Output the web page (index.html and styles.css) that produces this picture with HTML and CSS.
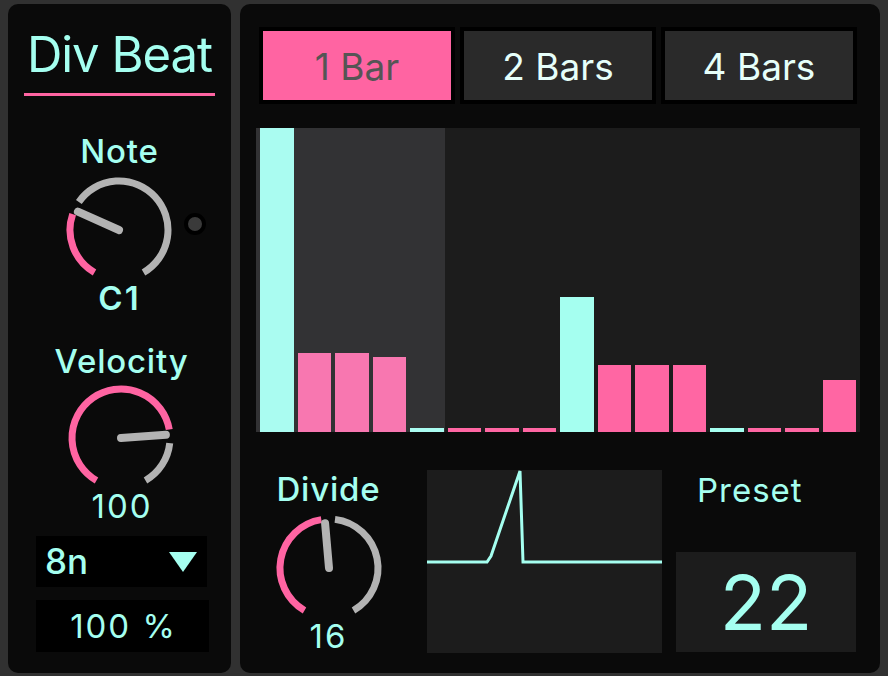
FILE: index.html
```html
<!DOCTYPE html>
<html lang="en">
<head>
  <meta charset="UTF-8" />
  <title>Div Beat</title>
  <link rel="stylesheet" href="styles.css">
</head>
<body>

  <div class="device">

    <div class="side">
      <div class="title">Div Beat</div>

      <div class="label note-label">Note</div>
      <div class="note-row">
        <svg class="knob" width="110" height="102" viewBox="0 0 110 102">
          <path class="arc-on" d="M30.5 95.44 A49 49 0 0 1 8.67 37.05" />
          <path class="arc-off" d="M14.86 24.89 A49 49 0 1 1 79.5 95.44" />
          <line class="needle" x1="55" y1="53" x2="13.9" y2="34.7" />
        </svg>
        <div class="led"></div>
      </div>
      <div class="value bold c1">C1</div>

      <div class="label vel-label">Velocity</div>
      <svg class="knob vel-knob" width="110" height="102" viewBox="0 0 110 102">
        <path class="arc-on" d="M30.5 95.44 A49 49 0 1 1 103.26 44.49" />
        <path class="arc-off" d="M103.73 58.12 A49 49 0 0 1 79.5 95.44" />
        <line class="needle" x1="55" y1="53" x2="99.89" y2="49.86" />
      </svg>
      <div class="value vel-value">100</div>

      <div class="select">
        <span>8n</span>
        <svg width="28" height="20" viewBox="0 0 28 20"><polygon points="0,0 28,0 14,20" fill="#a5fff0" /></svg>
      </div>
      <div class="percent">100 %</div>
    </div>

    <div class="main">
      <div class="tabs">
        <div class="tab active">1 Bar</div>
        <div class="tab">2 Bars</div>
        <div class="tab">4 Bars</div>
      </div>

      <div class="chart">
        <div class="bar accent lit" style="height: 304px"></div>
        <div class="bar lit" style="height: 79px"></div>
        <div class="bar lit" style="height: 79px"></div>
        <div class="bar lit" style="height: 75px"></div>
        <div class="bar accent lit" style="height: 4px"></div>
        <div class="bar" style="height: 4px"></div>
        <div class="bar" style="height: 4px"></div>
        <div class="bar" style="height: 4px"></div>
        <div class="bar accent" style="height: 135px"></div>
        <div class="bar" style="height: 67px"></div>
        <div class="bar" style="height: 67px"></div>
        <div class="bar" style="height: 67px"></div>
        <div class="bar accent" style="height: 4px"></div>
        <div class="bar" style="height: 4px"></div>
        <div class="bar" style="height: 4px"></div>
        <div class="bar" style="height: 52px"></div>
      </div>

      <div class="bottom">
        <div class="divide">
          <div class="label divide-label">Divide</div>
          <svg class="knob divide-knob" width="110" height="102" viewBox="0 0 110 102">
            <path class="arc-on" d="M30.5 95.44 A49 49 0 0 1 47.34 4.6" />
            <path class="arc-off" d="M60.97 4.37 A49 49 0 0 1 79.5 95.44" />
            <line class="needle" x1="55" y1="53" x2="51.08" y2="8.17" />
          </svg>
          <div class="value divide-value">16</div>
        </div>

        <svg class="envelope" width="235" height="183" viewBox="0 0 235 183">
          <polyline points="0,92 60,92 64,86 93,1 96,92 235,92" />
        </svg>

        <div class="preset">
          <div class="preset-label">Preset</div>
          <div class="preset-box">22</div>
        </div>
      </div>
    </div>

  </div>

</body>
</html>
```

FILE: styles.css
```css
body {
  margin: 0;
  background: #313131;
  font-family: Inter, Roboto, "Liberation Sans", sans-serif;
  color: #a5fff0;
}

.device {
  display: flex;
  gap: 9px;
  height: 676px;
  padding: 4px 8px 3px;
  box-sizing: border-box;
}

/* left column */
.side {
  width: 223px;
  background: #0a0a0a;
  border-radius: 10px;
  display: flex;
  flex-direction: column;
  align-items: center;
}

.title {
  margin-top: 26px;
  width: 191px;
  padding-bottom: 13px;
  border-bottom: 3px solid #ff64a2;
  font-size: 49px;
  font-weight: 400;
  letter-spacing: -1px;
  line-height: 50px;
  text-align: center;
  white-space: nowrap;
}

.label {
  font-size: 33px;
  font-weight: 500;
  letter-spacing: 0.8px;
  line-height: 34px;
}

.value {
  font-size: 33px;
  letter-spacing: 2px;
  line-height: 34px;
}

.bold {
  font-weight: 600;
}

.note-label {
  margin-top: 38px;
}

.note-row {
  align-self: stretch;
  display: flex;
  align-items: flex-start;
  gap: 10.5px;
  margin-top: 9px;
  padding-left: 55.5px;
}

.knob {
  display: block;
  overflow: visible;
}

.arc-on,
.arc-off {
  fill: none;
  stroke-width: 7;
}

.arc-on {
  stroke: #ff64a2;
}

.arc-off {
  stroke: #b3b3b3;
}

.needle {
  stroke: #b3b3b3;
  stroke-width: 8;
  stroke-linecap: round;
}

.led {
  margin-top: 36px;
  width: 14px;
  height: 14px;
  border: 4px solid #000;
  border-radius: 50%;
  background: #3a3a3a;
}

.c1 {
  margin-top: 1.6px;
}

.vel-label {
  margin-top: 29px;
  margin-left: 4px;
}

.vel-knob {
  margin-top: 7px;
  margin-left: 2.6px;
}

.vel-value {
  margin-top: 2px;
  margin-left: 5px;
}

.select {
  margin-top: 13.5px;
  margin-left: 4px;
  width: 171px;
  height: 51px;
  padding: 0 10px 0 9px;
  box-sizing: border-box;
  background: #000;
  display: flex;
  align-items: center;
  justify-content: space-between;
  font-size: 35px;
  font-weight: 500;
  line-height: 51px;
}

.select svg {
  display: block;
}

.percent {
  margin-top: 13px;
  margin-left: 6px;
  width: 173px;
  height: 52px;
  padding-left: 2px;
  box-sizing: border-box;
  background: #000;
  font-size: 33px;
  letter-spacing: 2px;
  line-height: 52px;
  text-align: center;
}

/* right column */
.main {
  width: 640px;
  background: #0a0a0a;
  border-radius: 10px;
  padding: 23px 20px 0 16px;
  box-sizing: border-box;
}

.tabs {
  display: flex;
  gap: 5px;
  margin: 0 3px;
}

.tab {
  flex: 1;
  height: 77px;
  box-sizing: border-box;
  border: 4px solid #000;
  padding-top: 3px;
  background: #2a2a2a;
  color: #e6fffa;
  font-size: 37px;
  line-height: 66px;
  text-align: center;
}

.tab.active {
  background: #ff64a2;
  color: #555;
}

.chart {
  margin-top: 24px;
  height: 304px;
  padding: 0 4px;
  display: flex;
  align-items: flex-end;
  gap: 4px;
  background: linear-gradient(to right, #323234 189px, #1c1c1c 189px);
}

.bar {
  flex: 1;
  background: #ff66a3;
}

.bar.lit {
  background: #f877b0;
}

.bar.accent {
  background: #a5fff0;
}

.bar.accent.lit {
  background: #aafcf1;
}

.bottom {
  margin-top: 38px;
  display: flex;
  align-items: flex-start;
}

.divide {
  width: 110px;
  margin-left: 17.5px;
  display: flex;
  flex-direction: column;
  align-items: center;
}

.divide-label {
  margin-top: 2px;
}

.divide-knob {
  margin-top: 8.5px;
}

.divide-value {
  margin-top: 2px;
}

.envelope {
  display: block;
  margin-left: 43.5px;
  background: #1c1c1c;
}

.envelope polyline {
  fill: none;
  stroke: #a5fff0;
  stroke-width: 3;
}

.preset {
  width: 180px;
  margin-left: 14px;
}

.preset-label {
  margin-top: 3px;
  margin-left: 21px;
  font-size: 33px;
  letter-spacing: 1px;
  line-height: 34px;
}

.preset-box {
  margin-top: 45px;
  height: 100px;
  background: #1c1c1c;
  font-size: 76px;
  line-height: 100px;
  text-align: center;
}
```
